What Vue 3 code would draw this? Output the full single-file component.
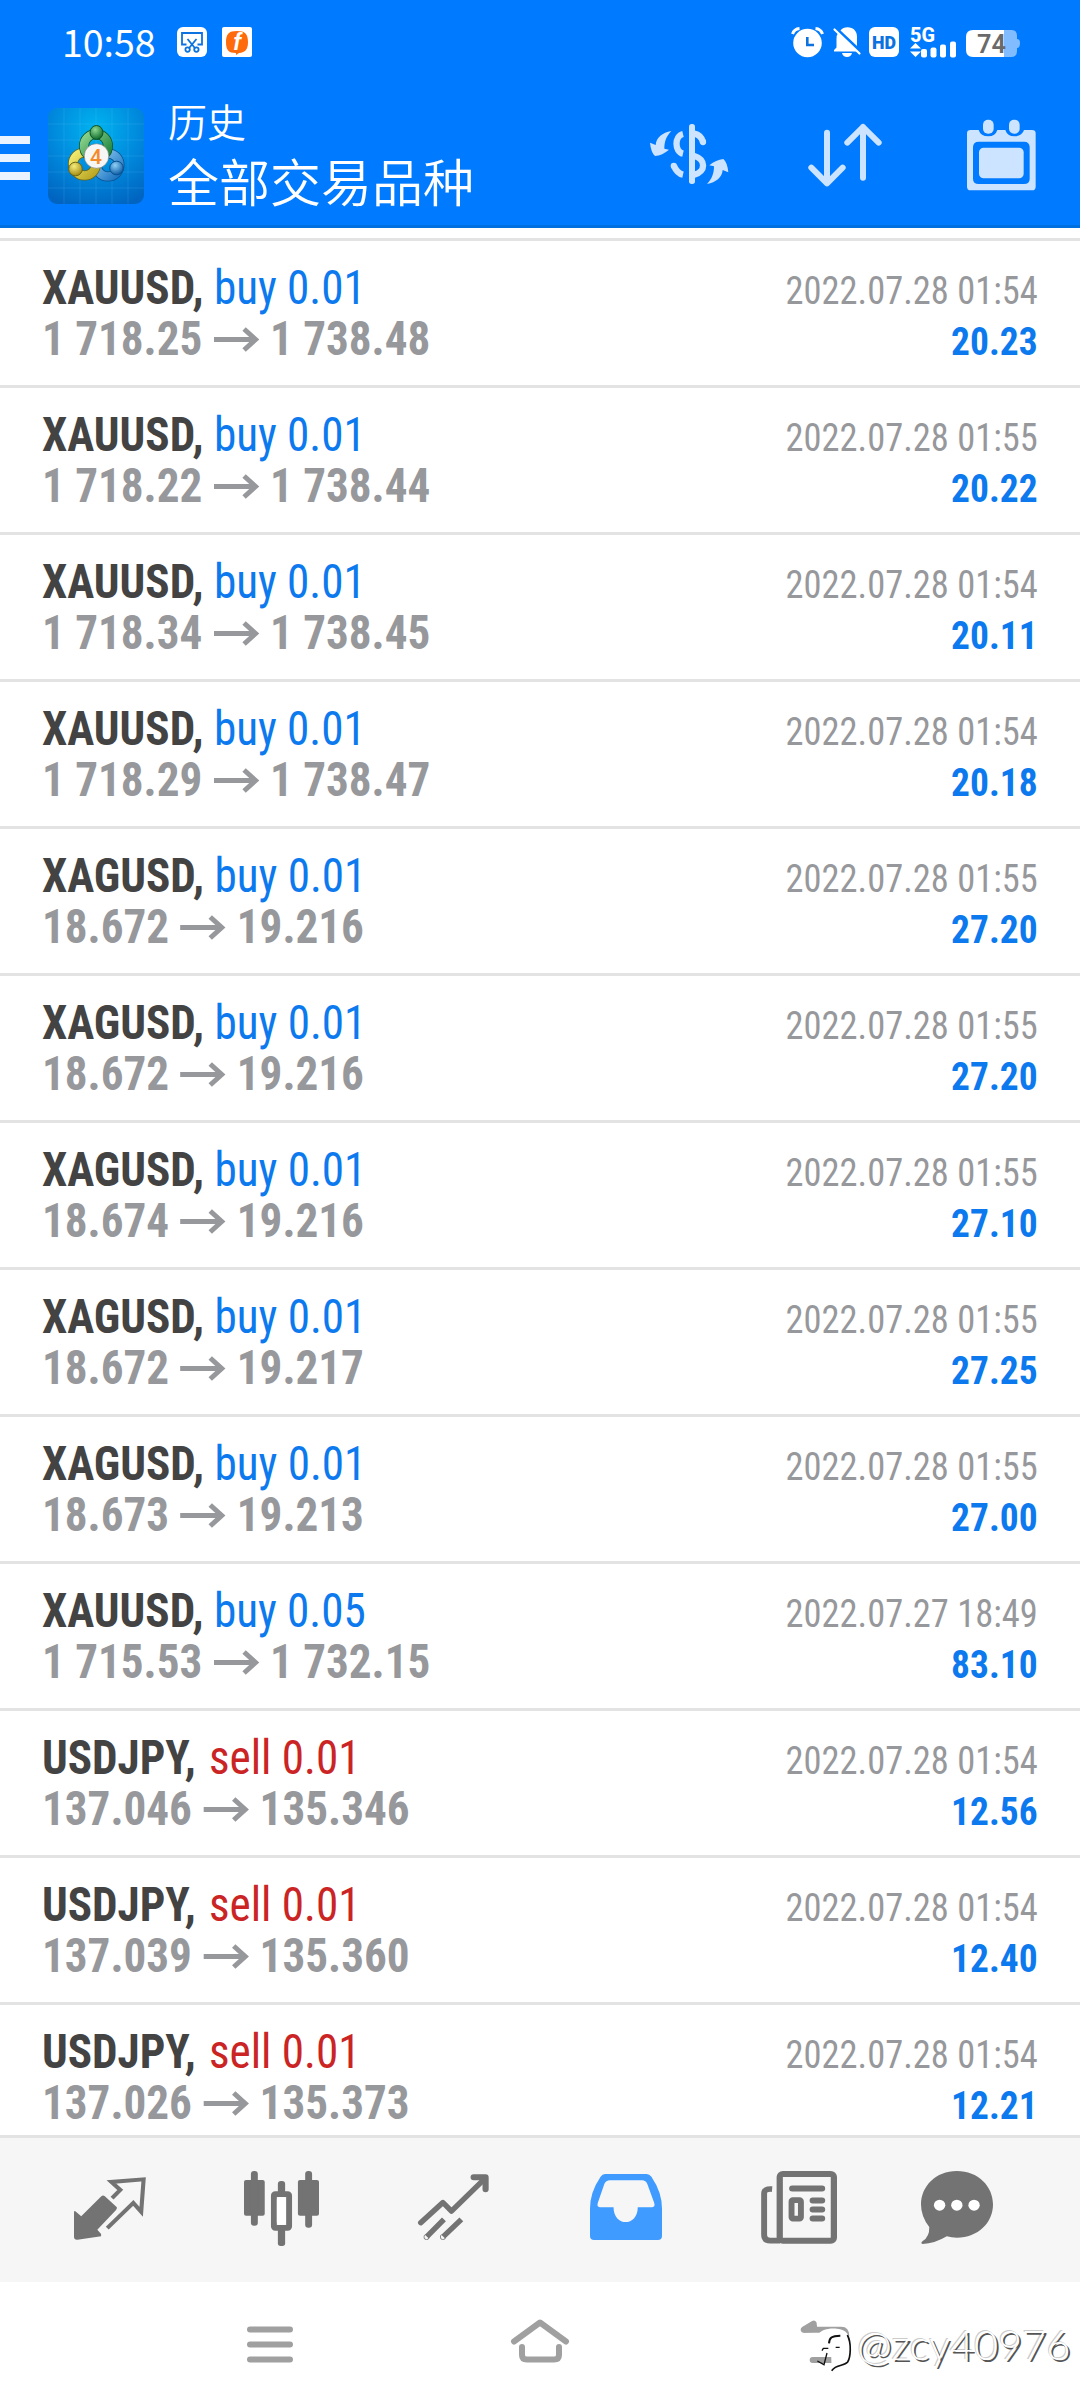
<script setup>
const d = (symbol, side, lots, from, to, time, profit) => ({ symbol, side, lots, from, to, time, profit })
const deals = [
  d('XAUUSD', 'buy', '0.01', '1 718.25', '1 738.48', '2022.07.28 01:54', '20.23'),
  d('XAUUSD', 'buy', '0.01', '1 718.22', '1 738.44', '2022.07.28 01:55', '20.22'),
  d('XAUUSD', 'buy', '0.01', '1 718.34', '1 738.45', '2022.07.28 01:54', '20.11'),
  d('XAUUSD', 'buy', '0.01', '1 718.29', '1 738.47', '2022.07.28 01:54', '20.18'),
  d('XAGUSD', 'buy', '0.01', '18.672', '19.216', '2022.07.28 01:55', '27.20'),
  d('XAGUSD', 'buy', '0.01', '18.672', '19.216', '2022.07.28 01:55', '27.20'),
  d('XAGUSD', 'buy', '0.01', '18.674', '19.216', '2022.07.28 01:55', '27.10'),
  d('XAGUSD', 'buy', '0.01', '18.672', '19.217', '2022.07.28 01:55', '27.25'),
  d('XAGUSD', 'buy', '0.01', '18.673', '19.213', '2022.07.28 01:55', '27.00'),
  d('XAUUSD', 'buy', '0.05', '1 715.53', '1 732.15', '2022.07.27 18:49', '83.10'),
  d('USDJPY', 'sell', '0.01', '137.046', '135.346', '2022.07.28 01:54', '12.56'),
  d('USDJPY', 'sell', '0.01', '137.039', '135.360', '2022.07.28 01:54', '12.40'),
  d('USDJPY', 'sell', '0.01', '137.026', '135.373', '2022.07.28 01:54', '12.21'),
]
</script>

<template>
  <div class="screen">
    <header class="header">
      <div class="status">
        <span class="clock">10:58</span>
        <svg class="s-cut" width="30" height="30" viewBox="0 0 30 30">
          <rect width="30" height="30" rx="6" fill="#fff" />
          <g fill="none" stroke="#0b72e0" stroke-width="1.8">
            <path d="M9.5 17.5H5V6H25V17.5H20.5" />
            <path d="M10.5 12 18.3 21.5M19.5 12 11.7 21.5" />
            <circle cx="10.6" cy="22.6" r="2.2" />
            <circle cx="19.4" cy="22.6" r="2.2" />
          </g>
        </svg>
        <svg class="s-app" width="30" height="30" viewBox="0 0 30 30">
          <rect width="30" height="30" rx="2" fill="#fff" />
          <path d="M15 4C23 4 26 7 26 15C26 22 23.5 25.5 17 26L14 28V26C6.5 26 4 23 4 15C4 7 7 4 15 4Z" fill="#ff6a0a" />
          <text x="15" y="22.500" text-anchor="middle" class="f-mark">f</text>
        </svg>
        <span class="grow"></span>
        <svg class="s-alarm" width="33" height="30" viewBox="0 0 33 30">
          <circle cx="16.5" cy="16" r="14.3" fill="#fff" />
          <path d="M1.5 7C2.5 4 5 1.8 8.5 1.5M31.5 7C30.5 4 28 1.8 24.5 1.5" stroke="#fff" stroke-width="3" fill="none" />
          <path d="M16.3 10V18H23" stroke="#0b72e0" stroke-width="2.6" fill="none" />
        </svg>
        <svg class="s-bell" width="28" height="30" viewBox="0 0 28 30">
          <path d="M3.5 12Q3.500 8 5 6L24 24.5H1V23L3.5 20.5Z" fill="#fff" />
          <path d="M7.5 3.5Q10 .3 14.5 .3C20.5 .3 24 4.5 24 10V19Z" fill="#fff" />
          <path d="M9 26H19Q18 30 14 30Q10 30 9 26Z" fill="#fff" />
          <path d="M1.5 2.5 26.5 26.5" stroke="#fff" stroke-width="2.200" stroke-linecap="round" />
        </svg>
        <svg class="s-hd" width="30" height="30" viewBox="0 0 30 30">
          <rect width="30" height="30" rx="6" fill="#fff" />
          <text x="15" y="21.700" text-anchor="middle" class="hd" textLength="24" lengthAdjust="spacingAndGlyphs">HD</text>
        </svg>
        <svg class="s-sig" width="46" height="31" viewBox="0 0 46 31">
          <text x="0" y="14.500" class="g5" textLength="25" lengthAdjust="spacingAndGlyphs">5G</text>
          <g fill="#fff">
            <path d="M0 21.5 5.500 16 11 21.500ZM0 24.500H11L5.500 30Z" />
            <rect x="11" y="22" width="6" height="8.500" rx="2" />
            <rect x="20.500" y="20.500" width="6" height="10" rx="2" />
            <rect x="30" y="17.500" width="6" height="13" rx="2" />
            <rect x="40" y="14.500" width="6" height="16" rx="2" />
          </g>
        </svg>
        <svg class="s-bat" width="54" height="28" viewBox="0 0 54 28">
          <path d="M38 0H46Q51 0 51 6V9Q54 9 54 13Q54 18 51 18V21Q51 27 45 27H38Z" fill="#80bcff" />
          <path d="M7 0H38V27H7Q0 27 0 20V7Q0 0 7 0Z" fill="#fff" />
          <text x="25.500" y="22.700" text-anchor="middle" class="pct" textLength="29" lengthAdjust="spacingAndGlyphs">74</text>
        </svg>
      </div>

      <div class="toolbar">
        <div class="burger"><i></i><i></i><i></i></div>
        <svg class="logo" width="96" height="96" viewBox="0 0 96 96">
          <defs>
            <radialGradient id="lg-bg" cx=".5" cy=".22" r=".85">
              <stop offset="0" stop-color="#00b4f0" />
              <stop offset=".55" stop-color="#0088dc" />
              <stop offset="1" stop-color="#0064c0" />
            </radialGradient>
            <linearGradient id="lg-g" x1="0" y1="0" x2="1" y2="1"><stop offset="0" stop-color="#8ed48e" /><stop offset="1" stop-color="#17803a" /></linearGradient>
            <linearGradient id="lg-y" x1="0" y1="0" x2="1" y2="1"><stop offset="0" stop-color="#f2ec72" /><stop offset="1" stop-color="#b8a420" /></linearGradient>
            <linearGradient id="lg-b" x1="0" y1="0" x2="1" y2="1"><stop offset="0" stop-color="#8ccbf2" /><stop offset="1" stop-color="#1a72c0" /></linearGradient>
            <radialGradient id="hd-g" cx=".4" cy=".3" r=".7"><stop offset="0" stop-color="#8fd892" /><stop offset="1" stop-color="#0f6c2c" /></radialGradient>
            <radialGradient id="hd-y" cx=".4" cy=".3" r=".7"><stop offset="0" stop-color="#f4ec7c" /><stop offset="1" stop-color="#a58c12" /></radialGradient>
            <radialGradient id="hd-b" cx=".4" cy=".3" r=".7"><stop offset="0" stop-color="#8fd0f6" /><stop offset="1" stop-color="#0d5da8" /></radialGradient>
          </defs>
          <rect width="96" height="96" rx="9" fill="url(#lg-bg)" />
          <path d="M16 0V96M32 0V96M48 0V96M64 0V96M80 0V96M0 16H96M0 32H96M0 48H96M0 64H96M0 80H96" stroke="#7fd8ff" stroke-opacity=".14" />
          <g fill="none">
            <circle cx="60" cy="57" r="11.500" stroke="#0b4f8c" stroke-width="10" />
            <circle cx="60" cy="57" r="11.500" stroke="url(#lg-b)" stroke-width="8.500" />
            <circle cx="36.500" cy="56" r="11.500" stroke="#6d6410" stroke-width="10" />
            <circle cx="36.500" cy="56" r="11.500" stroke="url(#lg-y)" stroke-width="8.500" />
            <circle cx="48" cy="38" r="12" stroke="#0d5224" stroke-width="10" />
            <circle cx="48" cy="38" r="12" stroke="url(#lg-g)" stroke-width="8.500" />
          </g>
          <ellipse cx="48.500" cy="24.500" rx="6.500" ry="7" fill="url(#hd-g)" stroke="#0d5224" />
          <circle cx="27.500" cy="61" r="6.800" fill="url(#hd-y)" stroke="#6d6410" />
          <circle cx="68.500" cy="60" r="6.800" fill="url(#hd-b)" stroke="#0b4f8c" />
          <circle cx="48.500" cy="48" r="12.300" fill="#f6f7f5" stroke="#777" stroke-width=".6" />
          <text x="48" y="55.500" text-anchor="middle" class="four">4</text>
        </svg>
        <div class="titles">
          <div class="t1">历史</div>
          <div class="t2">全部交易品种</div>
        </div>
        <span class="grow"></span>
        <svg class="i-dollar" width="80" height="62" viewBox="30 69 240 186" fill="none" stroke="#cce4ff">
          <g stroke-width="19">
            <path d="M132 102C106 108 106 155 132 161" />
            <path d="M132 224Q114 220 105 198" />
            <path d="M166 101Q186 105 192 126" />
            <path d="M166 168C201 178 201 215 166 224" />
          </g>
          <g fill="#cce4ff" stroke="none">
            <circle cx="104.500" cy="197.500" r="9.500" />
            <circle cx="192" cy="126" r="9.500" />
            <rect x="150" y="72" width="18" height="180" rx="8" />
            <path d="M97 93C70 98 52 112 50 135L33 128Q36 158 48 168Q70 166 90 149L76 146C76 125 82 108 97 93Z" />
            <path d="M204 252C231 247 249 233 251 210L268 217Q265 187 253 177Q231 179 211 196L225 199C225 220 219 237 204 252Z" />
          </g>
        </svg>
        <svg class="i-sort" width="74" height="64" viewBox="507 70 222 192" fill="none" stroke="#cce4ff" stroke-width="18" stroke-linecap="round" stroke-linejoin="round">
          <path d="M564 99V250M517 204 564 251 611 204M672 234V82M625 129 672 82 719 129" />
        </svg>
        <svg class="i-cal" width="69" height="72" viewBox="983 57 207 216">
          <path d="M994 90H1018Q1024 109 1047 109Q1068 109 1074 90H1098Q1104 109 1125 109Q1148 109 1154 90H1178Q1189 90 1189 100V260Q1189 271 1178 271H994Q983 271 983 260V100Q983 90 994 90ZM1018 125Q1001 125 1001 142V236Q1001 252 1018 252H1154Q1171 252 1171 236V142Q1171 125 1154 125Z" fill="#cce4ff" fill-rule="evenodd" />
          <rect x="1019" y="143" width="134" height="92" rx="14" fill="#cce4ff" />
          <rect x="1031" y="59" width="32" height="42" rx="15" fill="#cce4ff" />
          <rect x="1109" y="59" width="32" height="42" rx="15" fill="#cce4ff" />
        </svg>
      </div>
    </header>

    <main class="list">
      <article v-for="(r, i) in deals" :key="i" class="row">
        <div class="left">
          <div class="line"><b class="sym">{{ r.symbol }},</b> <span :class="r.side">{{ r.side }} {{ r.lots }}</span></div>
          <div class="line price">
            <span>{{ r.from }}</span>
            <svg class="arrow" width="49" height="26" viewBox="0 0 46 26" preserveAspectRatio="none" fill="none" stroke="#97989c" stroke-width="5">
              <path d="M0 12.500H42M30 2 41.500 12.500 30 23" />
            </svg>
            <span>{{ r.to }}</span>
          </div>
        </div>
        <div class="right">
          <div class="line time">{{ r.time }}</div>
          <div class="line profit">{{ r.profit }}</div>
        </div>
      </article>
    </main>

    <nav class="tabs">
      <svg class="n1" width="72" height="63" viewBox="215 230 210 190" preserveAspectRatio="none">
        <path d="M215 333H219L236 348 294 289Q299 283 305 288L340 321Q341 325 337 330L283 389 294 402V409L225 419Q215 420 215 410Z" fill="#737373" />
        <path d="M326 294 350 269 324 245 418 237 411 335 388 308 312 384" fill="none" stroke="#737373" stroke-width="12" />
      </svg>
      <svg class="n2" width="75" height="75" viewBox="709 212 217 223" preserveAspectRatio="none">
        <g fill="#737373">
          <rect x="709" y="239" width="60" height="106" rx="6" /><rect x="729" y="212" width="20" height="163" rx="9" />
          <rect x="865" y="239" width="61" height="106" rx="6" /><rect x="886" y="212" width="20" height="169" rx="9" />
          <rect x="807" y="242" width="21" height="40" rx="9" /><rect x="807" y="380" width="21" height="55" rx="8" />
        </g>
        <rect x="795.500" y="281" width="44" height="100" rx="4" fill="#f6f6f6" stroke="#737373" stroke-width="17" />
        <rect x="804" y="290" width="26" height="82" rx="8" fill="#fff" />
      </svg>
      <svg class="n3" width="71" height="66" viewBox="1213 221 208 199" preserveAspectRatio="none" fill="none" stroke="#737373" stroke-width="16" stroke-linejoin="round">
        <path d="M1221 368 1286 307 1311 333 1408 236" stroke-linecap="round" />
        <path d="M1376 231H1411V267" stroke-width="18" stroke-linecap="round" />
        <path d="M1239 410 1289 358M1287 410 1340 358" />
        <circle cx="1238" cy="411" r="1" stroke-width="15" /><circle cx="1286" cy="411" r="1" stroke-width="15" />
      </svg>
      <svg class="n4" width="72" height="66" viewBox="146 221 211 199" preserveAspectRatio="none">
        <path fill-rule="evenodd" d="M190 221H312Q320 221 326 229Q357 276 357 325V408Q357 420 345 420H158Q146 420 146 408V325Q146 276 177 229Q182 221 190 221ZM204 240Q193 240 188 251L169 308Q165 321 175 321H215C215 381 286 381 286 321H328Q338 321 334 308L314 251Q309 240 299 240Z" fill="#3f9bff" />
      </svg>
      <svg class="n5" width="76" height="73" viewBox="645 212 219 218" preserveAspectRatio="none">
        <rect x="699" y="221" width="156" height="199" rx="9" fill="none" stroke="#737373" stroke-width="18" />
        <path d="M677 266Q654 264 654 280V402Q654 420 672 420H700" fill="none" stroke="#737373" stroke-width="17" />
        <g fill="none" stroke="#737373" stroke-width="18" stroke-linecap="round">
          <path d="M735 264H821M794 300H821M794 327H821M794 354H821" />
        </g>
        <rect x="733" y="299" width="27" height="55" rx="4" fill="none" stroke="#737373" stroke-width="17" />
      </svg>
      <svg class="n6" width="72" height="73" viewBox="1109 212 209 218" preserveAspectRatio="none">
        <path d="M1213 212C1275 212 1318 258 1318 312C1318 366 1275 411 1213 411Q1197 411 1184 407Q1148 429 1114 430Q1106 428 1114 421Q1134 408 1133 379Q1109 348 1109 312C1109 258 1152 212 1213 212Z" fill="#737373" />
        <g fill="#fff"><circle cx="1163" cy="314" r="16.500" /><circle cx="1213" cy="314" r="16.500" /><circle cx="1263" cy="314" r="16.500" /></g>
      </svg>
    </nav>

    <footer class="sys">
      <svg class="y1" width="46" height="37" viewBox="0 0 46 37" stroke="#a0a0a0" stroke-width="6" stroke-linecap="round"><path d="M3 3.500H43M3 18.500H43M3 33.500H43" /></svg>
      <svg class="y2" width="58" height="44" viewBox="0 0 58 44" fill="none" stroke="#a0a0a0" stroke-width="6" stroke-linecap="round" stroke-linejoin="round"><path d="M3 22.500 29 3.500 55 22.500M11 28V36Q11 40.500 16 40.500H43Q48 40.500 48 36V28" /></svg>
      <svg class="mark" width="280" height="60" viewBox="55 55 840 180">
        <path d="M72 90 102 72 104 88Z" fill="#a0a0a0" stroke="#a0a0a0" stroke-width="18" stroke-linejoin="round" />
        <path d="M72 90H185Q200 90 200 110M99 181H156" fill="none" stroke="#a0a0a0" stroke-width="18" />
        <circle cx="99" cy="181" r="9" fill="#a0a0a0" />
        <path d="M108 118C116 88 150 85 172 87C200 90 212 105 212 135C212 175 205 195 176 197L157 212 155 171H110Z" fill="#fff" />
        <g fill="none" stroke="#111">
          <path d="M203 106C216 130 213 172 204 187C193 200 170 193 156 213" stroke-width="5" />
          <path d="M148 131C149 115 155 108 182 108" stroke-width="6" />
          <path d="M127 153 131 146H146M168 143H180M113 184 133 195 142 160" stroke-width="4" />
        </g>
        <text x="232" y="182" class="mk" textLength="640" lengthAdjust="spacingAndGlyphs">@zcy40976</text>
      </svg>
    </footer>
  </div>
</template>

<style>
body { margin: 0; background: #fff; }
</style>

<style scoped>
.screen { width: 1080px; height: 2408px; display: flex; flex-direction: column; overflow: hidden; background: #fff; font-family: "Roboto Condensed", Roboto, sans-serif; font-stretch: 75%; }
svg { display: block; flex: none; overflow: visible; }
.grow { flex: 1; }
.header { flex: none; height: 228px; box-sizing: border-box; background: #007aff; border-bottom: 3px solid #0070e0; }
.status { height: 84px; display: flex; align-items: flex-start; padding: 27px 60px 0 62px; box-sizing: border-box; }
.clock { font: 400 37.5px/34px "Noto Sans CJK SC", sans-serif; width: 115px; margin-top: -3px; color: #fff; }
.s-app { margin-left: 15px; }
.s-bell { margin-left: 9px; }
.s-hd { margin-left: 8px; }
.s-sig { margin-left: 11px; }
.s-bat { margin: 3px 0 0 10px; }
.f-mark { font: italic 700 23px "Liberation Sans", sans-serif; fill: #fff; }
.hd { font: 900 19px Roboto, sans-serif; fill: #0b72e0; }
.g5 { font: 800 20px Roboto, sans-serif; fill: #fff; }
.pct { font: 600 26px Roboto, sans-serif; fill: #6a6a6a; }
.four { font: 500 21px Roboto, sans-serif; fill: #f58a2a; }
.mk { font: 300 122px Lato, sans-serif; fill: #fff; text-shadow: 2px 2px 0 #555, -1px -1px 0 #ccc; }
.toolbar { height: 141px; display: flex; align-items: flex-start; padding-right: 44px; }
.burger { width: 30px; margin: 52px 18px 0 0; display: flex; flex-direction: column; gap: 10px; }
.burger i { height: 8px; background: #e8f3ff; }
.logo { margin-top: 24px; }
.titles { margin: 8px 0 0 24px; color: #fff; font-family: "Noto Sans CJK SC", sans-serif; font-weight: 350; }
.t1 { font-size: 39px; line-height: 56px; }
.t2 { font-size: 51px; line-height: 64px; }
.i-dollar { margin-top: 39px; }
.i-sort { margin: 39px 0 0 79px; }
.i-cal { margin: 35px 0 0 85px; }
.list { flex: none; height: 1907px; overflow: hidden; padding-top: 10px; box-sizing: border-box; }
.row { height: 147px; box-sizing: border-box; border-top: 3px solid #e3e3e3; padding: 21px 42px 0; display: flex; justify-content: space-between; }
.line { height: 51px; line-height: 51px; white-space: nowrap; }
.left { font-size: 48px; transform: scaleX(.94); transform-origin: left; }
.right { font-size: 39px; text-align: right; padding-top: 4px; }
.sym { color: #434343; font-weight: 700; }
.buy { color: #0c7aee; }
.sell { color: #cb2424; margin-left: 3px; }
.price { display: flex; color: #97989c; font-weight: 700; }
.arrow { margin: 14px 11px 0 12px; }
.time { color: #97989c; transform: scaleX(.935); transform-origin: right; }
.profit { color: #0c7aee; font-weight: 700; transform: scaleX(.96); transform-origin: right; }
.tabs { flex: none; height: 147px; box-sizing: border-box; border-top: 3px solid #e3e3e3; background: #f6f6f6; display: flex; }
.n1 { margin: 39px 0 0 74px; }
.n2 { margin: 33px 0 0 98px; }
.n3 { margin: 36px 0 0 99px; }
.n4 { margin: 36px 0 0 101px; }
.n5 { margin: 33px 0 0 99px; }
.n6 { margin: 33px 0 0 84px; }
.sys { flex: 1; display: flex; align-items: flex-start; position: relative; }
.y1 { margin: 44px 0 0 247px; }
.y2 { margin: 37px 0 0 218px; }
.mark { position: absolute; left: 798px; top: 36px; }
</style>
